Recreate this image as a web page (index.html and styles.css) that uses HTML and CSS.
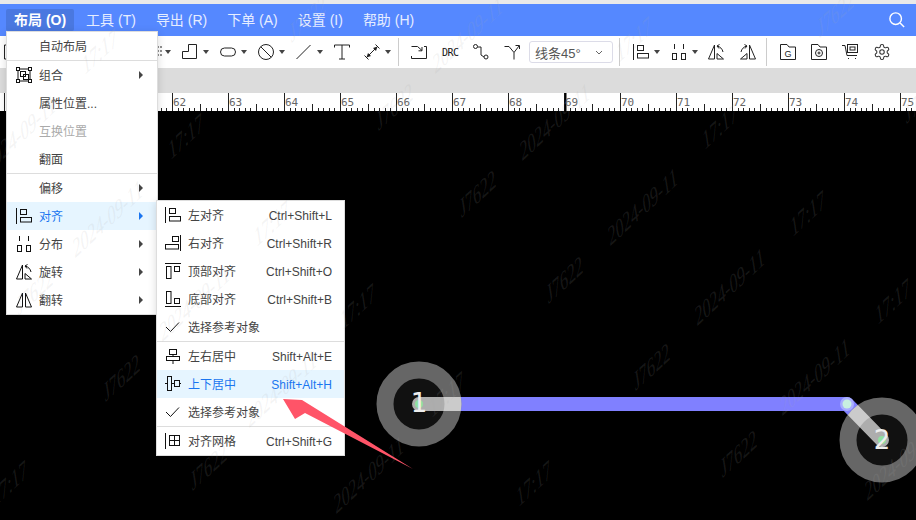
FILE: index.html
```html
<!DOCTYPE html>
<html lang="zh-CN">
<head>
    <meta charset="UTF-8">
    <title>PCB 布局</title>
    <link rel="stylesheet" href="styles.css">
</head>
<body>
    <svg class="icon-defs" width="0" height="0">
        <symbol id="i-align-left" viewBox="0 0 16 16"><path d="M.5 0V16"/><rect x="4.5" y="1.5" width="6" height="5"/><rect x="4.5" y="9.5" width="11" height="4.5"/></symbol>
        <symbol id="i-align-right" viewBox="0 0 16 16"><path d="M15.5 0V16"/><rect x="7.5" y="1.5" width="6" height="5"/><rect x=".5" y="9.5" width="13" height="4.5"/></symbol>
        <symbol id="i-align-top" viewBox="0 0 16 16"><path d="M0 .5H16"/><rect x="1.5" y="3.5" width="4.5" height="12"/><rect x="9.5" y="3.5" width="5" height="5"/></symbol>
        <symbol id="i-align-bottom" viewBox="0 0 16 16"><path d="M0 15.5H16"/><rect x="1.5" y=".5" width="4.5" height="12"/><rect x="9.5" y="7.5" width="5" height="5"/></symbol>
        <symbol id="i-center-h" viewBox="0 0 16 16"><rect x="4.5" y="1.5" width="7" height="5"/><rect x="1.5" y="8.5" width="13" height="4"/><path d="M8 6.5V8.5M8 12.5V16"/></symbol>
        <symbol id="i-center-v" viewBox="0 0 16 16"><rect x="2.5" y=".5" width="4" height="14"/><rect x="9.5" y="4.5" width="5" height="6"/><path d="M0 7.5H2.5M6.5 7.5H9.5M14.5 7.5H16"/></symbol>
        <symbol id="i-check" viewBox="0 0 16 16"><path d="M1 8L5.5 12.5L14 3.5"/></symbol>
        <symbol id="i-grid" viewBox="0 0 16 16"><path d="M.5 0V16"/><rect x="4.5" y="2.5" width="10" height="10"/><path d="M9.5 2.5V12.5M4.5 7.5H14.5"/></symbol>
        <symbol id="i-group" viewBox="0 0 16 16"><rect x=".5" y=".5" width="3" height="3"/><rect x="12.5" y=".5" width="3" height="3"/><rect x=".5" y="12.5" width="3" height="3"/><rect x="12.5" y="12.5" width="3" height="3"/><rect x="4.5" y="4.5" width="5" height="5"/><rect x="7.5" y="7.5" width="5" height="5"/><path d="M3.5 2H12.5M2 3.5V12.5M3.5 14H12.5M14 3.5V12.5"/></symbol>
        <symbol id="i-distribute" viewBox="0 0 16 16"><path d="M3.5 0V5M12.5 0V5"/><rect x="1.5" y="9.5" width="4" height="6"/><rect x="10.5" y="9.5" width="4" height="6"/></symbol>
        <symbol id="i-rotate" viewBox="0 0 16 16"><path d="M6.5 1L.5 15H6.5Z"/><path d="M9 15H15.5L9 9.5Z"/><path d="M9 2C12 2.5 14.5 5 15 8M9 2L11.5 .5M9 2L11 4.5"/></symbol>
        <symbol id="i-rotate-r" viewBox="0 0 16 16"><path d="M9.5 1L15.5 15H9.5Z"/><path d="M7 15H.5L7 9.5Z"/><path d="M7 2C4 2.5 1.5 5 1 8M7 2L4.5 .5M7 2L5 4.5"/></symbol>
        <symbol id="i-flip" viewBox="0 0 16 16"><path d="M6.5 1L.5 15H6.5Z"/><path d="M9.5 1L15.5 15H9.5Z"/></symbol>
        <symbol id="i-folder" viewBox="0 0 16 16"><path d="M.5 .5H7L9 3H15.5V15.5H.5Z"/></symbol>
    </svg>

    <div class="page">
        <header class="menubar">
            <span class="menu-item active">布局 (O)</span>
            <span class="menu-item">工具 (T)</span>
            <span class="menu-item">导出 (R)</span>
            <span class="menu-item">下单 (A)</span>
            <span class="menu-item">设置 (I)</span>
            <span class="menu-item">帮助 (H)</span>
            <svg class="search" width="16" height="16" viewBox="0 0 18 18"><circle cx="7.5" cy="7.5" r="6.5"/><path d="M12.5 12.5L17 17"/></svg>
        </header>

        <div class="toolbar">
            <span class="tool tool-first"><svg class="ico"><path d="M5 1H.5V15H5"/></svg></span>
            <span class="tool tool-wide"><svg class="ico"><rect x="1.5" y="1.5" width="13" height="13"/></svg><i class="caret"></i></span>
            <span class="tool tool-wide"><svg class="ico"><circle cx="8" cy="8" r="7"/></svg><i class="caret"></i></span>
            <span class="tool tool-wide"><svg class="ico"><path d="M1 8H15M8 1V15"/></svg><i class="caret"></i></span>
            <span class="tool tool-wide"><svg class="ico"><path d="M14 2V4M14 6V8M14 10V12M17 2V4M17 6V8M17 10V12"/></svg><i class="caret"></i></span>
            <span class="tool tool-wide"><svg class="ico"><path d="M.5 14.5V7.5H6.5V.5H14.5V14.5Z"/></svg><i class="caret"></i></span>
            <span class="tool tool-wide"><svg class="ico"><rect x=".5" y="4" width="15" height="8" rx="4"/></svg><i class="caret"></i></span>
            <span class="tool tool-wide"><svg class="ico"><circle cx="8" cy="8" r="7.5"/><path d="M2.7 2.7L13.3 13.3"/></svg><i class="caret"></i></span>
            <span class="tool tool-wide"><svg class="ico"><path d="M.5 15L14.5 1"/></svg><i class="caret"></i></span>
            <span class="tool tool-t"><svg class="ico"><path d="M.5 3.5V1H15.5V3.5M8 1V15M5 15H11"/></svg></span>
            <span class="tool tool-dim"><svg class="ico"><path d="M2.5 13.5L13.5 2.5M.5 11.5L4.5 15.5M11.5 .5L15.5 4.5"/><path class="solid" d="M2.5 13.5L7 12L4 9ZM13.5 2.5L12 7L9 4Z"/></svg><i class="caret"></i></span>
            <span class="sep sep-first"></span>
            <span class="tool"><svg class="ico"><path d="M.5 12V14.5H15.5V2.5H13"/><path d="M.5 2.5H6.5L11 6.5M11 3V6.8H7.5"/></svg></span>
            <span class="tool tool-text">DRC</span>
            <span class="tool"><svg class="ico"><circle cx="2.5" cy="2.5" r="2"/><circle cx="13" cy="13" r="2"/><path d="M4.5 3H8V11L11 13"/></svg></span>
            <span class="tool tool-tight"><svg class="ico"><path d="M.5 2.5H5L10 8.5V15.5M10 8.5L15 2M11.5 1.5H15.5V5"/></svg></span>
            <span class="select">线条45°<svg class="chevron" width="8" height="5" viewBox="0 0 8 5"><path d="M1 1L4 4L7 1"/></svg></span>
            <span class="sep"></span>
            <span class="tool tool-wide"><svg class="ico"><use href="#i-align-left"/></svg><i class="caret"></i></span>
            <span class="tool tool-narrow"><svg class="ico"><use href="#i-distribute"/></svg><i class="caret"></i></span>
            <span class="tool tool-flip"><svg class="ico"><use href="#i-rotate"/></svg></span>
            <span class="tool tool-last"><svg class="ico"><use href="#i-rotate-r"/></svg></span>
            <span class="sep"></span>
            <span class="tool"><svg class="ico"><use href="#i-folder"/><text class="file-letter" x="8" y="13">G</text></svg></span>
            <span class="tool"><svg class="ico"><use href="#i-folder"/><circle cx="8" cy="9" r="3.5"/><circle cx="8" cy="9" r="1"/></svg></span>
            <span class="tool"><svg class="ico"><path d="M0 1.5H3L5 11.5H15"/><rect x="5.5" y=".5" width="10" height="8"/><rect x="8" y="3" width="5" height="3"/><path d="M6 14.5H7M13 14.5H14"/></svg></span>
            <span class="tool"><svg class="gear" width="18" height="18" viewBox="0 0 24 24"><path d="M12.22 2h-.44a2 2 0 0 0-2 2v.18a2 2 0 0 1-1 1.73l-.43.25a2 2 0 0 1-2 0l-.15-.08a2 2 0 0 0-2.73.73l-.22.38a2 2 0 0 0 .73 2.73l.15.1a2 2 0 0 1 1 1.72v.51a2 2 0 0 1-1 1.74l-.15.09a2 2 0 0 0-.73 2.73l.22.38a2 2 0 0 0 2.73.73l.15-.08a2 2 0 0 1 2 0l.43.25a2 2 0 0 1 1 1.73V20a2 2 0 0 0 2 2h.44a2 2 0 0 0 2-2v-.18a2 2 0 0 1 1-1.73l.43-.25a2 2 0 0 1 2 0l.15.08a2 2 0 0 0 2.73-.73l.22-.39a2 2 0 0 0-.73-2.73l-.15-.08a2 2 0 0 1-1-1.74v-.5a2 2 0 0 1 1-1.74l.15-.09a2 2 0 0 0 .73-2.73l-.22-.38a2 2 0 0 0-2.73-.73l-.15.08a2 2 0 0 1-2 0l-.43-.25a2 2 0 0 1-1-1.73V4a2 2 0 0 0-2-2z"/><circle cx="12" cy="12" r="3"/></svg></span>
        </div>

        <div class="tabstrip"></div>

        <svg class="ruler" width="916" height="18">
            <defs>
                <pattern id="ticks" x="4" y="0" width="56" height="18" patternUnits="userSpaceOnUse">
                    <path d="M.5 0V18M6.5 15V18M11.5 15V18M17.5 15V18M22.5 15V18M28.5 11V18M34.5 15V18M39.5 15V18M45.5 15V18M50.5 15V18"/>
                </pattern>
            </defs>
            <rect class="ruler-ticks" width="916" height="18" fill="url(#ticks)"/>
            <path class="ruler-cursor" d="M565.5 0V18"/>
            <text x="61" y="13">60</text><text x="117" y="13">61</text><text x="173" y="13">62</text>
            <text x="229" y="13">63</text><text x="285" y="13">64</text><text x="341" y="13">65</text>
            <text x="397" y="13">66</text><text x="453" y="13">67</text><text x="509" y="13">68</text>
            <text x="565" y="13">69</text><text x="621" y="13">70</text><text x="677" y="13">71</text>
            <text x="733" y="13">72</text><text x="789" y="13">73</text><text x="845" y="13">74</text>
            <text x="901" y="13">75</text>
        </svg>

        <svg class="board" width="916" height="409" viewBox="0 111 916 409">
            <defs>
                <clipPath id="pad-a"><circle cx="419" cy="404" r="42.5"/></clipPath>
                <clipPath id="pad-b"><circle cx="882" cy="440" r="42.5"/></clipPath>
            </defs>
            <path class="track" d="M419 404H847L882 440"/>
            <circle class="pad-ring" cx="419" cy="404" r="34"/>
            <circle class="pad-ring" cx="882" cy="440" r="34"/>
            <path class="track-over" clip-path="url(#pad-a)" d="M419 404H847"/>
            <path class="track-over" clip-path="url(#pad-b)" d="M847 404L882 440"/>
            <circle class="joint" cx="847" cy="404" r="7"/>
            <circle class="joint-core" cx="847" cy="404" r="4.5"/>
            <circle class="pad-dot" cx="419" cy="404" r="4"/>
            <circle class="pad-dot" cx="882" cy="440" r="4"/>
            <text class="pad-num" x="419" y="412">1</text>
            <text class="pad-num" x="882" y="449">2</text>
        </svg>

        <div class="menu menu-main">
            <div class="row"><span class="ico-slot"></span>自动布局</div>
            <div class="divider"></div>
            <div class="row"><svg class="ico-slot"><use href="#i-group"/></svg>组合<i class="arrow"></i></div>
            <div class="row"><span class="ico-slot"></span>属性位置...</div>
            <div class="row disabled"><span class="ico-slot"></span>互换位置</div>
            <div class="row"><span class="ico-slot"></span>翻面</div>
            <div class="divider"></div>
            <div class="row"><span class="ico-slot"></span>偏移<i class="arrow"></i></div>
            <div class="row hover"><svg class="ico-slot"><use href="#i-align-left"/></svg>对齐<i class="arrow"></i></div>
            <div class="row"><svg class="ico-slot"><use href="#i-distribute"/></svg>分布<i class="arrow"></i></div>
            <div class="row"><svg class="ico-slot"><use href="#i-rotate"/></svg>旋转<i class="arrow"></i></div>
            <div class="row"><svg class="ico-slot"><use href="#i-flip"/></svg>翻转<i class="arrow"></i></div>
        </div>

        <div class="menu menu-sub">
            <div class="row"><svg class="ico-slot"><use href="#i-align-left"/></svg>左对齐<span class="key">Ctrl+Shift+L</span></div>
            <div class="row"><svg class="ico-slot"><use href="#i-align-right"/></svg>右对齐<span class="key">Ctrl+Shift+R</span></div>
            <div class="row"><svg class="ico-slot"><use href="#i-align-top"/></svg>顶部对齐<span class="key">Ctrl+Shift+O</span></div>
            <div class="row"><svg class="ico-slot"><use href="#i-align-bottom"/></svg>底部对齐<span class="key">Ctrl+Shift+B</span></div>
            <div class="row"><svg class="ico-slot"><use href="#i-check"/></svg>选择参考对象</div>
            <div class="divider"></div>
            <div class="row"><svg class="ico-slot"><use href="#i-center-h"/></svg>左右居中<span class="key">Shift+Alt+E</span></div>
            <div class="row hover"><svg class="ico-slot"><use href="#i-center-v"/></svg>上下居中<span class="key">Shift+Alt+H</span></div>
            <div class="row"><svg class="ico-slot"><use href="#i-check"/></svg>选择参考对象</div>
            <div class="divider"></div>
            <div class="row"><svg class="ico-slot"><use href="#i-grid"/></svg>对齐网格<span class="key">Ctrl+Shift+G</span></div>
        </div>

        <!-- watermark lies over everything, sheared so the stems stay nearly upright -->
        <svg class="watermark" width="916" height="520">
            <text transform="matrix(.74 -.68 .2 1.3 309 27)">J7622</text>
            <text transform="matrix(.74 -.68 .2 1.3 396 115)">J7622</text>
            <text transform="matrix(.74 -.68 .2 1.3 479 202)">J7622</text>
            <text transform="matrix(.74 -.68 .2 1.3 566 288)">J7622</text>
            <text transform="matrix(.74 -.68 .2 1.3 653 375)">J7622</text>
            <text transform="matrix(.74 -.68 .2 1.3 740 462)">J7622</text>
            <text transform="matrix(.74 -.68 .2 1.3 837 22)">J7622</text>
            <text transform="matrix(.74 -.68 .2 1.3 924 108)">J7622</text>
            <text transform="matrix(.74 -.68 .2 1.3 36 300)">J7622</text>
            <text transform="matrix(.74 -.68 .2 1.3 123 386)">J7622</text>
            <text transform="matrix(.74 -.68 .2 1.3 210 475)">J7622</text>
            <text transform="matrix(.74 -.68 .2 1.3 22 142)">2024-09-11</text>
            <text transform="matrix(.74 -.68 .2 1.3 109 227)">2024-09-11</text>
            <text transform="matrix(.74 -.68 .2 1.3 196 311)">2024-09-11</text>
            <text transform="matrix(.74 -.68 .2 1.3 283 397)">2024-09-11</text>
            <text transform="matrix(.74 -.68 .2 1.3 370 483)">2024-09-11</text>
            <text transform="matrix(.74 -.68 .2 1.3 469 43)">2024-09-11</text>
            <text transform="matrix(.74 -.68 .2 1.3 556 130)">2024-09-11</text>
            <text transform="matrix(.74 -.68 .2 1.3 644 215)">2024-09-11</text>
            <text transform="matrix(.74 -.68 .2 1.3 731 295)">2024-09-11</text>
            <text transform="matrix(.74 -.68 .2 1.3 816 385)">2024-09-11</text>
            <text transform="matrix(.74 -.68 .2 1.3 901 470)">2024-09-11</text>
            <text transform="matrix(.74 -.68 .2 1.3 101 60)">17:17</text>
            <text transform="matrix(.74 -.68 .2 1.3 187 145)">17:17</text>
            <text transform="matrix(.74 -.68 .2 1.3 273 232)">17:17</text>
            <text transform="matrix(.74 -.68 .2 1.3 359 315)">17:17</text>
            <text transform="matrix(.74 -.68 .2 1.3 448 403)">17:17</text>
            <text transform="matrix(.74 -.68 .2 1.3 535 492)">17:17</text>
            <text transform="matrix(.74 -.68 .2 1.3 635 48)">17:17</text>
            <text transform="matrix(.74 -.68 .2 1.3 721 135)">17:17</text>
            <text transform="matrix(.74 -.68 .2 1.3 809 222)">17:17</text>
            <text transform="matrix(.74 -.68 .2 1.3 894 310)">17:17</text>
            <text transform="matrix(.74 -.68 .2 1.3 11 492)">17:17</text>
        </svg>

        <svg class="callout" width="916" height="520">
            <path d="M283 399L302 400L413 469L305 413L295 419Z"/>
        </svg>
    </div>
</body>
</html>
```

FILE: styles.css
```css
* {
    box-sizing: border-box;
}
body {
    margin: 0;
    background-color: #000;
    font-family: "Liberation Sans", "Noto Sans CJK SC", sans-serif;
    font-size: 12px;
    color: #444;
}
svg {
    display: block;
}
.icon-defs {
    position: absolute;
}
.page {
    position: relative;
    display: flex;
    flex-direction: column;
    width: 916px;
    height: 520px;
    overflow: hidden;
    background-color: #000;
}

/* top menu */
.menubar {
    display: flex;
    align-items: center;
    gap: 4px;
    flex: none;
    height: 36px;
    padding-left: 6px;
    background-color: #5588ff;
    background-clip: padding-box;
    border-top: 4px solid #e9e9e9;
}
.menu-item {
    height: 22px;
    padding: 0 8px;
    border-radius: 2px;
    font-size: 14px;
    line-height: 22px;
    color: #e6edff;
    white-space: nowrap;
}
.menu-item.active {
    background-color: #4a78e0;
    color: #fff;
    font-weight: bold;
}
.search {
    margin-left: auto;
    margin-right: 11px;
    fill: none;
    stroke: #fff;
    stroke-width: 1.6;
}

/* toolbar */
.toolbar {
    display: flex;
    align-items: center;
    flex: none;
    height: 32px;
    padding-left: 4px;
    background-color: #fff;
}
.tool {
    display: flex;
    align-items: center;
    flex: none;
    width: 31px;
}
.tool-first { width: 26px; }
.tool-wide { width: 38px; }
.tool-narrow { width: 37px; }
.tool-t { width: 30px; }
.tool-dim { width: 34px; }
.tool-tight { width: 25px; }
.tool-flip { width: 32px; }
.tool-last { width: 26px; }
.tool-text {
    font-family: "DejaVu Sans Mono", monospace;
    font-size: 10px;
    letter-spacing: -0.5px;
    color: #111;
}
.ico {
    flex: none;
    width: 16px;
    height: 16px;
    overflow: visible;
    fill: none;
    stroke: #222;
    stroke-width: 1;
}
.ico .solid {
    fill: #222;
    stroke: none;
}
.file-letter {
    font-size: 9px;
    text-anchor: middle;
    fill: #222;
    stroke: none;
}
.gear {
    fill: none;
    stroke: #333;
    stroke-width: 1.4;
}
.caret {
    flex: none;
    width: 0;
    height: 0;
    margin-left: 5px;
    border-left: 3.5px solid transparent;
    border-right: 3.5px solid transparent;
    border-top: 4px solid #444;
}
.sep {
    flex: none;
    width: 1px;
    height: 28px;
    margin-right: 13px;
    background-color: #ccc;
}
.sep-first {
    margin-right: 12px;
}
.select {
    display: flex;
    align-items: center;
    justify-content: space-between;
    flex: none;
    width: 84px;
    height: 22px;
    margin-right: 6px;
    padding: 0 9px 0 5px;
    border: 1px solid #dcdce8;
    border-radius: 3px;
    font-size: 13px;
    color: #555;
}
.chevron {
    fill: none;
    stroke: #666;
}
.tabstrip {
    flex: none;
    height: 25px;
    background-color: #dcdcdc;
}

/* ruler */
.ruler {
    flex: none;
    background-color: #fff;
}
#ticks path {
    stroke: #222;
    stroke-width: 1;
    fill: none;
    shape-rendering: crispEdges;
}
.ruler text {
    font-family: "DejaVu Sans Mono", monospace;
    font-size: 11px;
    fill: #666;
}
.ruler-cursor {
    stroke: #000;
    stroke-width: 2;
}

/* board */
.board {
    flex: none;
    background-color: #000;
}
.track {
    fill: none;
    stroke: #8080ff;
    stroke-width: 14;
    stroke-linejoin: round;
}
.pad-ring {
    fill: #111;
    stroke: #666;
    stroke-width: 17;
}
.track-over {
    fill: none;
    stroke: #fff;
    stroke-opacity: 0.66;
    stroke-width: 14;
    stroke-linecap: round;
}
.joint {
    fill: #a9aeff;
}
.joint-core {
    fill: #c8f0e0;
}
.pad-dot {
    fill: #90e0a0;
}
.pad-num {
    font-family: "DejaVu Sans", sans-serif;
    font-size: 26px;
    text-anchor: middle;
    fill: #eee;
}

/* dropdown menus */
.menu {
    position: absolute;
    background-color: #fff;
    border: 1px solid #ddd;
    box-shadow: 0 2px 8px rgba(0, 0, 0, 0.15);
}
.menu-main {
    top: 31px;
    left: 6px;
    width: 152px;
}
.menu-sub {
    top: 200px;
    left: 156px;
    width: 189px;
}
.row {
    display: flex;
    align-items: center;
    gap: 7px;
    height: 28px;
    padding: 0 12px 2px 9px;
    white-space: nowrap;
}
.menu-sub .row {
    padding-left: 8px;
}
.row.hover {
    background-color: #e6f5ff;
    color: #1a75f0;
}
.row.disabled {
    color: #aaa;
}
.ico-slot {
    flex: none;
    width: 16px;
    height: 16px;
    margin-top: 2px;
    fill: none;
    stroke: #111;
    stroke-width: 1;
}
.divider {
    height: 1px;
    background-color: #ddd;
}
.arrow {
    width: 0;
    height: 0;
    margin: 2px 2px 0 auto;
    border-top: 4px solid transparent;
    border-bottom: 4px solid transparent;
    border-left: 4px solid #444;
}
.row.hover .arrow {
    border-left-color: #1a75f0;
}
.key {
    margin: 4px 0 0 auto;
}

/* overlays */
.watermark,
.callout {
    position: absolute;
    top: 0;
    left: 0;
    pointer-events: none;
}
.watermark text {
    font-family: "Liberation Serif", serif;
    font-size: 20px;
    text-anchor: middle;
    fill: rgba(170, 170, 170, 0.14);
}
.callout path {
    fill: #ff5468;
}
```
